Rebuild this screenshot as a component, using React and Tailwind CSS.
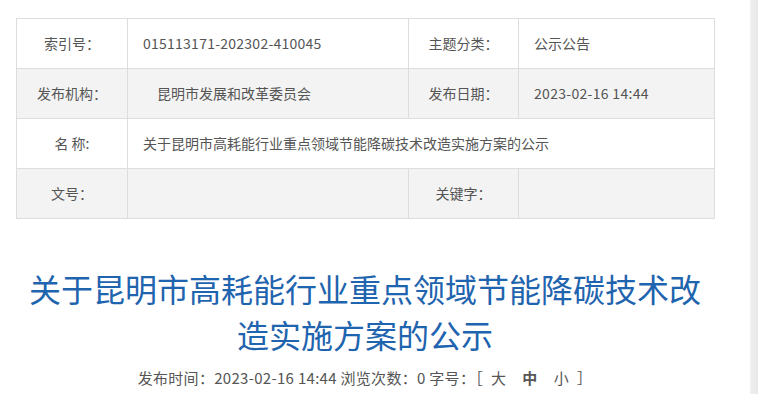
import React from "react";

const font = { fontFamily: '"Noto Sans CJK SC", "Noto Sans", sans-serif' };

const App = () => {
  return (
    <div className="flex w-[758px] h-[394px] overflow-hidden bg-white" style={font}>
      <div className="flex-1 pl-[16px] pt-[18px]">
        <div className="w-[698px]">
          <table className="w-[698px] border-collapse table-fixed text-[14px] text-[#555555]">
            <colgroup>
              <col className="w-[111px]" />
              <col className="w-[281px]" />
              <col className="w-[110px]" />
              <col className="w-[196px]" />
            </colgroup>
            <tbody>
              <tr className="h-[50px] bg-white">
                <td className="border border-[#dddddd] text-center">索引号：</td>
                <td className="border border-[#dddddd] pl-[15px] tracking-[0.25px]">015113171-202302-410045</td>
                <td className="border border-[#dddddd] text-center">主题分类：</td>
                <td className="border border-[#dddddd] pl-[15px]">公示公告</td>
              </tr>
              <tr className="h-[50px] bg-[#f3f3f3]">
                <td className="border border-[#dddddd] text-center">发布机构：</td>
                <td className="border border-[#dddddd] pl-[29px]">昆明市发展和改革委员会</td>
                <td className="border border-[#dddddd] text-center">发布日期：</td>
                <td className="border border-[#dddddd] pl-[15px] tracking-[0.3px]">2023-02-16 14:44</td>
              </tr>
              <tr className="h-[50px] bg-white">
                <td className="border border-[#dddddd] text-center">名 称:</td>
                <td className="border border-[#dddddd] pl-[15px]" colSpan={3}>
                  关于昆明市高耗能行业重点领域节能降碳技术改造实施方案的公示
                </td>
              </tr>
              <tr className="h-[50px] bg-[#f3f3f3]">
                <td className="border border-[#dddddd] text-center">文号：</td>
                <td className="border border-[#dddddd]"></td>
                <td className="border border-[#dddddd] text-center">关键字：</td>
                <td className="border border-[#dddddd]"></td>
              </tr>
            </tbody>
          </table>

          <h1 className="mt-[46px] text-center text-[32px] leading-[46px] font-normal text-[#1f64ae]">
            关于昆明市高耗能行业重点领域节能降碳技术改造实施方案的公示
          </h1>

          <div className="mt-[9px] text-center text-[15px] leading-[24px] text-[#555555] tracking-[0.3px]">
            <span>发布时间：2023-02-16 14:44 浏览次数：0 字号：</span>
            <span>［</span>
            <span className="mx-[8px] cursor-pointer">大</span>
            <span className="mx-[8px] cursor-pointer font-bold">中</span>
            <span className="mx-[8px] cursor-pointer">小</span>
            <span>］</span>
          </div>
        </div>
      </div>
      <div className="w-[8px] h-full bg-gradient-to-r from-[#f0f0f0] to-[#e8e8e8]"></div>
    </div>
  );
};

export default App;
